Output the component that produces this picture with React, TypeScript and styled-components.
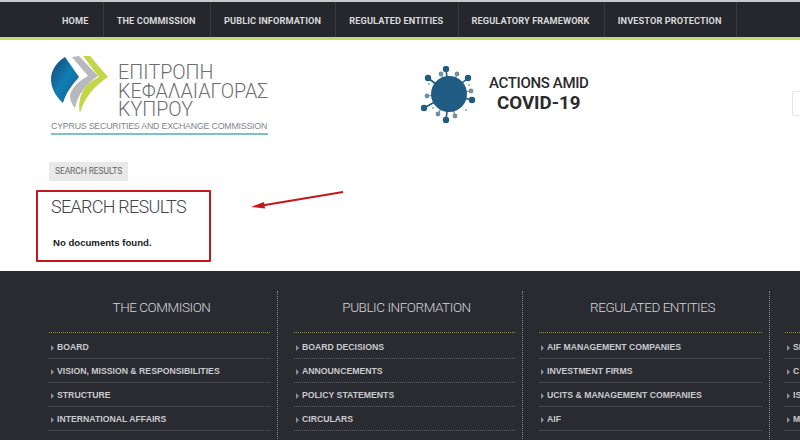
import React from "react";
import styled, { createGlobalStyle } from "styled-components";

const Global = createGlobalStyle`
  html, body { margin: 0; padding: 0; width: 800px; height: 440px; overflow: hidden; background: #fff; }
  #root { width: 800px; height: 440px; overflow: hidden; }
`;

const Page = styled.div`
  position: relative;
  width: 800px;
  height: 440px;
  overflow: hidden;
  display: flex;
  flex-direction: column;
  font-family: "Liberation Sans", Arial, sans-serif;
`;

const Nav = styled.nav`
  height: 35px;
  flex: none;
  display: flex;
  padding-left: 49px;
  background: #26272d;
  border-top: 2px solid #c9c9cb;
  border-bottom: 3px solid #c6d96a;
`;

const NavItem = styled.a`
  display: flex;
  align-items: center;
  padding: 2px 14.3px 0 13px;
  height: 100%;
  box-sizing: border-box;
  border-right: 1px solid #3a3b42;
  font: 700 9.2px/1 Roboto, sans-serif;
  letter-spacing: 0.1px;
  color: #d9d9d9;
  white-space: nowrap;
`;

const Header = styled.header`
  height: 122px;
  flex: none;
  display: flex;
  padding-left: 49px;
  box-sizing: border-box;
  position: relative;
`;

const Logo = styled.div`
  width: 221px;
  flex: none;
  box-sizing: border-box;
  padding: 16px 2px 0;
  display: flex;
  flex-direction: column;
`;

const LogoTop = styled.div`
  display: flex;
  gap: 9px;
  height: 65px;
`;

const MarkSvg = styled.svg`
  flex: none;
`;

const LogoWords = styled.div`
  padding-top: 8px;
  font: 300 19.7px/18.5px Roboto, sans-serif;
  color: #6d6e71;
  white-space: nowrap;
`;

const LogoLine = styled.div`
  font: 400 8.8px/11px "Liberation Sans", sans-serif;
  letter-spacing: -0.2px;
  color: #7f868d;
  white-space: nowrap;
  border-bottom: 2px solid #7cc0c8;
  padding-bottom: 1px;
`;

const Covid = styled.div`
  margin-left: 150px;
  padding-top: 26px;
  display: flex;
  gap: 11px;
  height: 62px;
`;

const CovidText = styled.div`
  padding-top: 8px;
  display: flex;
  flex-direction: column;
  align-items: center;
  color: #2b2b2d;
  white-space: nowrap;
`;

const CovidTop = styled.span`
  font: 500 15px/19px Roboto, sans-serif;
  letter-spacing: -0.35px;
`;

const CovidBottom = styled.span`
  font: 700 18.7px/20px Roboto, sans-serif;
`;

const SearchStub = styled.div`
  position: absolute;
  left: 792px;
  top: 51px;
  width: 40px;
  height: 25px;
  border: 1px solid #e4e4e4;
  border-radius: 2px;
  box-sizing: border-box;
`;

const Main = styled.main`
  height: 109px;
  flex: none;
  padding-left: 49px;
  box-sizing: border-box;
`;

const Crumb = styled.div`
  width: fit-content;
  height: 19px;
  padding: 0 6px;
  background: #e9e9e9;
  font: 400 8.5px/19px Roboto, sans-serif;
  letter-spacing: -0.1px;
  color: #666;
`;

const Title = styled.h1`
  margin: 14px 0 0 2px;
  font: 300 18px/24px Roboto, sans-serif;
  color: #44444a;
  letter-spacing: -0.72px;
`;

const Empty = styled.p`
  margin: 17px 0 0 4px;
  font: 700 9.6px/13px "Liberation Sans", sans-serif;
  color: #1c1c1c;
`;

const RedBox = styled.div`
  position: absolute;
  left: 36px;
  top: 190px;
  width: 175px;
  height: 72px;
  box-sizing: border-box;
  border: 2px solid #c4161c;
  border-radius: 1px;
`;

const Arrow = styled.svg`
  position: absolute;
  left: 248px;
  top: 188px;
`;

const Footer = styled.footer`
  flex: 1;
  min-height: 0;
  display: flex;
  align-items: flex-start;
  background: #2a2b31;
  padding: 20px 0 0 33px;
`;

const Column = styled.section<{ $width: number }>`
  flex: none;
  width: ${(p) => p.$width}px;
  height: 160px;
  box-sizing: border-box;
  padding: 0 7px 0 16px;
  border-right: 1px dotted #8a8b8f;
  &:last-child { border-right: 0; padding-left: 15px; }
`;

const ColumnTitle = styled.h2`
  margin: 0;
  height: 35px;
  padding: 6px 0 0 4px;
  border-bottom: 1px dotted #8f9150;
  text-align: center;
  font: 300 13.5px/20px Roboto, sans-serif;
  letter-spacing: -0.45px;
  color: #d4d5d8;
  white-space: nowrap;
`;

const List = styled.ul`
  margin: 2px 0 0;
  padding: 0;
  list-style: none;
`;

const Row = styled.li`
  height: 24px;
  box-sizing: border-box;
  display: flex;
  align-items: center;
  gap: 3px;
  padding: 2px 0 0 2px;
  border-bottom: 1px dotted #5f6064;
  font: 700 8.7px/1 "Liberation Sans", sans-serif;
  color: #c9cacd;
  white-space: nowrap;
`;

const Caret = styled.i`
  width: 0;
  height: 0;
  border-left: 3px solid #8d8e92;
  border-top: 3px solid transparent;
  border-bottom: 3px solid transparent;
`;

const navItems = ["HOME", "THE COMMISSION", "PUBLIC INFORMATION", "REGULATED ENTITIES", "REGULATORY FRAMEWORK", "INVESTOR PROTECTION"];

const columns = [
  { width: 245, title: "THE COMMISION", rows: ["BOARD", "VISION, MISSION & RESPONSIBILITIES", "STRUCTURE", "INTERNATIONAL AFFAIRS"] },
  { width: 245, title: "PUBLIC INFORMATION", rows: ["BOARD DECISIONS", "ANNOUNCEMENTS", "POLICY STATEMENTS", "CIRCULARS"] },
  { width: 247, title: "REGULATED ENTITIES", rows: ["AIF MANAGEMENT COMPANIES", "INVESTMENT FIRMS", "UCITS & MANAGEMENT COMPANIES", "AIF"] },
  { width: 245, title: "", rows: ["SI", "C", "IS", "M"] },
];

const LogoMark = () => (
  <MarkSvg width="58" height="60" viewBox="0 0 58 60">
    <defs>
      <linearGradient id="blue" x1="0" y1="0" x2="1" y2="1">
        <stop offset="0" stopColor="#1b3f73" />
        <stop offset="0.5" stopColor="#0f7fb4" />
        <stop offset="1" stopColor="#1a4f86" />
      </linearGradient>
    </defs>
    <path d="M14 1 L28 21 C22 28 15 36 12 47 C4 40 0 31 0 23 C0 14 6 6 14 1 Z" fill="url(#blue)" />
    <path d="M21 1 L28 0 L47 20 C36 27 27 38 24 52 C19 46 18 40 20 36 C24 28 30 24 37 20 Z" fill="#b7b9bc" />
    <path d="M32 0 L39 0 L57 21 C44 29 33 42 29 57 C27 48 29 40 33 33 C37 27 42 24 48 21 Z" fill="#c3d648" />
  </MarkSvg>
);

const bigSpikes = [[26, 3], [26, 54], [8, 12], [48, 12], [52, 34], [4, 42]];
const midSpikes = [[21, 8], [37, 8], [51, 25], [7, 30], [18, 48], [35, 50]];
const tinyDots = [[9, 18], [49, 19], [13, 42], [46, 44]];

const Virus = () => (
  <MarkSvg width="58" height="58" viewBox="0 0 58 58">
    {bigSpikes.map(([x, y], i) => (
      <g key={i} fill="#1f5b82" stroke="#1f5b82">
        <line x1="29" y1="28" x2={x} y2={y} strokeWidth="1.6" />
        <circle cx={x} cy={y} r="3.2" stroke="none" />
      </g>
    ))}
    {midSpikes.map(([x, y], i) => (
      <g key={i} fill="#6f8fa3" stroke="#6f8fa3">
        <line x1="29" y1="28" x2={x} y2={y} strokeWidth="1.2" />
        <circle cx={x} cy={y} r="2.4" stroke="none" />
      </g>
    ))}
    {tinyDots.map(([x, y], i) => (
      <circle key={i} cx={x} cy={y} r="1.2" fill="#a9bcc8" />
    ))}
    <circle cx="29" cy="28" r="18" fill="#1f5b82" />
  </MarkSvg>
);

export default function App() {
  return (
    <Page>
      <Global />
      <Nav>
        {navItems.map((n) => (
          <NavItem key={n}>{n}</NavItem>
        ))}
      </Nav>
      <Header>
        <Logo>
          <LogoTop>
            <LogoMark />
            <LogoWords>
              ΕΠΙΤΡΟΠΗ
              <br />
              ΚΕΦΑΛΑΙΑΓΟΡΑΣ
              <br />
              ΚΥΠΡΟΥ
            </LogoWords>
          </LogoTop>
          <LogoLine>CYPRUS SECURITIES AND EXCHANGE COMMISSION</LogoLine>
        </Logo>
        <Covid>
          <Virus />
          <CovidText>
            <CovidTop>ACTIONS AMID</CovidTop>
            <CovidBottom>COVID-19</CovidBottom>
          </CovidText>
        </Covid>
        <SearchStub />
      </Header>
      <Main>
        <Crumb>SEARCH RESULTS</Crumb>
        <Title>SEARCH RESULTS</Title>
        <Empty>No documents found.</Empty>
      </Main>
      <Footer>
        {columns.map((c, i) => (
          <Column key={i} $width={c.width}>
            <ColumnTitle>{c.title}</ColumnTitle>
            <List>
              {c.rows.map((r) => (
                <Row key={r}>
                  <Caret />
                  {r}
                </Row>
              ))}
            </List>
          </Column>
        ))}
      </Footer>
      <RedBox />
      <Arrow width="98" height="24" viewBox="0 0 98 24">
        <path d="M95 4 L14 17.5" stroke="#c4161c" strokeWidth="2.2" fill="none" />
        <path d="M3 19 L16 14 L17 20.5 Z" fill="#c4161c" />
      </Arrow>
    </Page>
  );
}
